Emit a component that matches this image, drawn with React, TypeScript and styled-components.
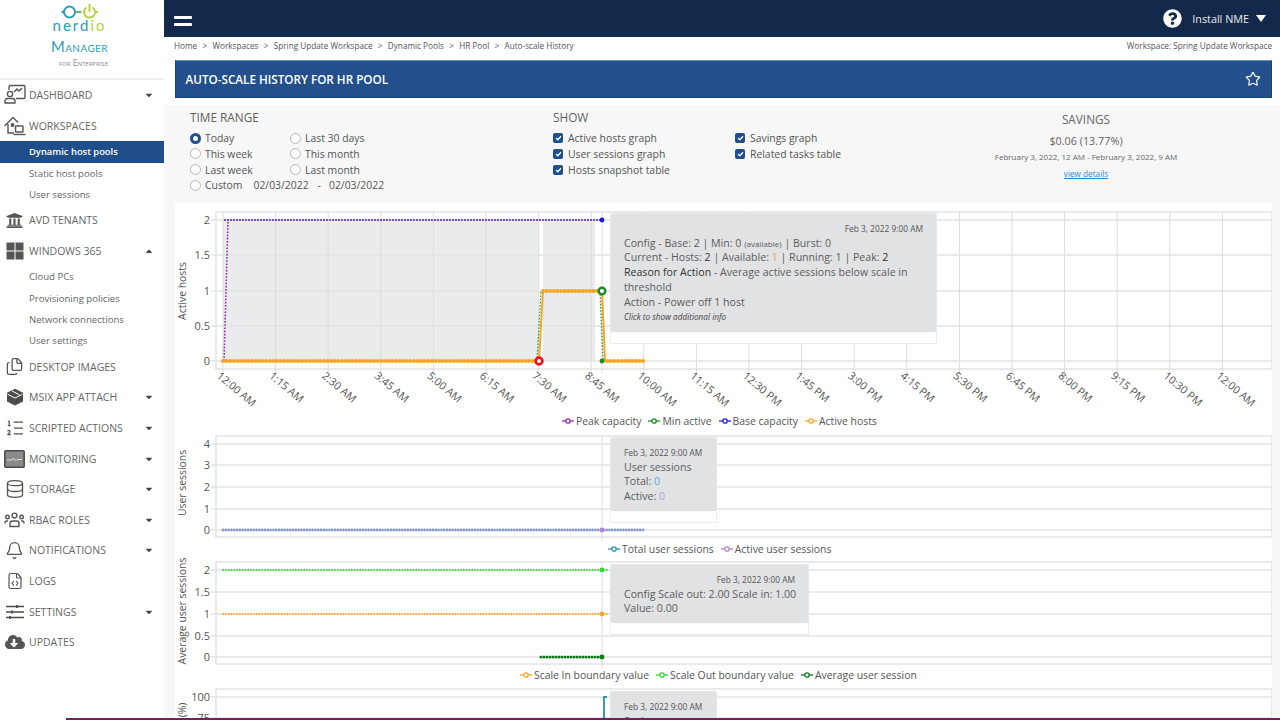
import React from "react";
import styled, { createGlobalStyle } from "styled-components";
import { Bell, Database, FileCode, Files, ListOrdered, Star } from "lucide-react";
import { FaCloudDownloadAlt, FaQuestionCircle, FaUniversity, FaCaretDown, FaCaretUp } from "react-icons/fa";

const Global = createGlobalStyle`
  html, body { margin: 0; padding: 0; height: 720px; overflow: hidden; background: #fff; }
  body { font-family: "Open Sans", "Liberation Sans", sans-serif; color: #555; }
  * { box-sizing: border-box; }
`;

const Page = styled.div`
  display: flex;
  width: 1280px;
  height: 720px;
  overflow: hidden;
  position: relative;
`;
const Sidebar = styled.aside`
  width: 164px;
  flex: none;
  background: #fff;
  display: flex;
  flex-direction: column;
`;
const LogoBox = styled.div`
  height: 80px;
  flex: none;
  border-bottom: 2px solid #eeeeee;
  display: flex;
  flex-direction: column;
  align-items: center;
  padding-right: 5px;
`;
const LogoWord = styled.div`
  font-family: "Lato", sans-serif;
  font-size: 15px;
  line-height: 14px;
  letter-spacing: 2px;
  color: #2a9bb8;
  margin-top: -6px;
  span { color: #b9cf45; }
`;
const LogoManager = styled.div`
  font-family: "Lato", sans-serif;
  font-size: 14.8px;
  line-height: 16px;
  margin-top: 6px;
  color: #2a9bb8;
  font-variant: small-caps;
  letter-spacing: 0.4px;
`;
const LogoFor = styled.div`
  font-size: 8.6px;
  line-height: 9px;
  margin-top: 5px;
  margin-left: 8px;
  color: #8a8a8a;
  font-variant: small-caps;
`;
const NavRow = styled.div`
  height: 30.65px;
  flex: none;
  display: flex;
  align-items: center;
  font-size: 10.5px;
  color: #666;
  position: relative;
  padding-left: 29px;
`;
const NavIcon = styled.span`
  position: absolute;
  left: 2.5px;
  top: 50%;
  transform: translateY(-50%);
  width: 24px;
  height: 24px;
  display: flex;
  align-items: center;
  justify-content: center;
  color: #555;
`;
const NavCaret = styled.span`
  position: absolute;
  left: 144px;
  top: 50%;
  transform: translateY(-50%);
  display: flex;
  color: #444;
`;
const SubRow = styled.div<{ $active?: boolean }>`
  height: 21.25px;
  flex: none;
  display: flex;
  align-items: center;
  padding-left: 29px;
  font-size: ${(p) => (p.$active ? "9.4px" : "9.6px")};
  color: ${(p) => (p.$active ? "#fff" : "#666")};
  background: ${(p) => (p.$active ? "#1f4e8a" : "transparent")};
  font-weight: ${(p) => (p.$active ? 600 : 400)};
`;
const Main = styled.main`
  flex: 1;
  min-width: 0;
  background: #f7f7f7;
  display: flex;
  flex-direction: column;
`;
const TopBar = styled.header`
  height: 37px;
  flex: none;
  background: #12294b;
  display: flex;
  align-items: center;
  padding: 0 12px 0 10px;
  color: #fff;
`;
const Burger = styled.div`
  width: 18px;
  margin-top: 5px;
  display: flex;
  flex-direction: column;
  gap: 4px;
  span { height: 3px; background: #fff; display: block; border-radius: 1px; }
`;
const TopRight = styled.div`
  margin-left: auto;
  display: flex;
  align-items: center;
  font-size: 10.8px;
  color: #e8ebf0;
`;
const InstallLabel = styled.span`
  margin-left: 10px;
`;
const CaretDown = styled.span`
  width: 0;
  height: 0;
  border-left: 5px solid transparent;
  border-right: 5px solid transparent;
  border-top: 7px solid #fff;
  margin-left: 7px;
  margin-right: 2px;
`;
const CrumbBar = styled.div`
  height: 23px;
  flex: none;
  background: #fff;
  display: flex;
  align-items: center;
  justify-content: space-between;
  padding: 0 8px 6px 10px;
  font-size: 8.2px;
  color: #555;
`;
const Crumbs = styled.div`
  display: flex;
  gap: 5.3px;
`;
const HeadWrap = styled.div`
  background: #fff;
  padding: 0 8px 7px 11px;
  flex: none;
`;
const TitleBar = styled.div`
  height: 38px;
  background: #23508c;
  border: 1px solid #1c4273;
  border-top-color: #6d90bd;
  display: flex;
  align-items: center;
  justify-content: space-between;
  padding: 0 10px 0 9.5px;
  font-size: 11.7px;
  font-weight: 600;
  color: #fff;
`;
const Filters = styled.section`
  height: 98px;
  flex: none;
  display: flex;
  padding-top: 4px;
  position: relative;
`;
const TimeCol = styled.div`
  width: 389px;
  flex: none;
  padding-left: 26px;
`;
const ShowCol = styled.div`
  width: 432px;
  flex: none;
`;
const SectionTitle = styled.div`
  font-size: 11.8px;
  line-height: 16px;
  color: #5f5f5f;
  margin-bottom: 5.5px;
`;
const OptionGrid = styled.div<{ $col: number }>`
  display: grid;
  grid-template-columns: ${(p) => p.$col}px auto;
  grid-auto-rows: 15.67px;
  justify-content: start;
`;
const Option = styled.label`
  display: flex;
  align-items: center;
  font-size: 10.4px;
  color: #555;
  white-space: nowrap;
`;
const Radio = styled.span<{ $on?: boolean }>`
  width: 11px;
  height: 11px;
  border-radius: 50%;
  margin-right: 4px;
  flex: none;
  background: #fff;
  border: ${(p) => (p.$on ? "3px solid #1f4e8a" : "1px solid #b5b5b5")};
`;
const Check = styled.span`
  width: 10px;
  height: 10px;
  border-radius: 2px;
  margin-right: 5px;
  flex: none;
  background: #1f4e8a;
  display: flex;
  align-items: center;
  justify-content: center;
`;
const DateText = styled.span<{ $m: number }>`
  margin-left: ${(p) => p.$m}px;
`;
const SavingsCol = styled.div`
  width: 202px;
  flex: none;
  display: flex;
  flex-direction: column;
  align-items: center;
  color: #666;
`;
const SavTitle = styled.div`
  font-size: 11.8px;
  line-height: 16px;
  margin-top: 2px;
`;
const SavValue = styled.div`
  font-size: 10.8px;
  line-height: 14px;
  margin-top: 7px;
`;
const SavRange = styled.div`
  font-size: 8px;
  line-height: 12px;
  margin-top: 3px;
  white-space: nowrap;
`;
const SavLink = styled.a`
  font-size: 8.2px;
  line-height: 12px;
  margin-top: 5px;
  color: #2e86c9;
  text-decoration: underline;
`;
const ChartPanel = styled.div`
  margin-left: 11px;
  width: 1097px;
  background: #fff;
  flex: none;
  height: 520px;
`;
const ChartBlock = styled.div<{ $h: number }>`
  position: relative;
  height: ${(p) => p.$h}px;
  svg.plot { display: block; position: absolute; left: 0; top: 0; }
`;
const Legend = styled.div<{ $top: number; $left: number }>`
  position: absolute;
  top: ${(p) => p.$top}px;
  left: ${(p) => p.$left}px;
  display: flex;
  gap: 7px;
  font-size: 10.4px;
  line-height: 14px;
  color: #555;
  white-space: nowrap;
`;
const LegendItem = styled.span`
  display: inline-flex;
  align-items: center;
  gap: 2px;
`;
const TipShadow = styled.div<{ $l: number; $t: number; $w: number; $h: number }>`
  position: absolute;
  left: ${(p) => p.$l}px;
  top: ${(p) => p.$t}px;
  width: ${(p) => p.$w}px;
  height: ${(p) => p.$h}px;
  background: #fff;
  border: 1px solid #ececec;
`;
const Tip = styled.div`
  position: absolute;
  left: 0;
  right: 0;
  top: 0;
  bottom: 11px;
  background: #e1e2e4;
  border-radius: 3px;
  padding: 8px 13px 0 13px;
  font-size: 10.6px;
  line-height: 14.9px;
  color: #5c5c5c;
  box-shadow: 0 0 1px rgba(0,0,0,.25);
  overflow: hidden;
`;
const TipDate = styled.div<{ $right?: boolean }>`
  font-size: 8.4px;
  line-height: 13.5px;
  text-align: ${(p) => (p.$right ? "right" : "left")};
  color: #555;
  white-space: nowrap;
`;
const TipLine = styled.div`
  white-space: nowrap;
`;
const Dark = styled.span`
  color: #333;
`;
const Small = styled.span`
  font-size: 8px;
  line-height: 1;
`;
const Italic = styled.div`
  font-size: 8.2px;
  font-style: italic;
  color: #444;
`;
const Colored = styled.span<{ $c: string }>`
  color: ${(p) => p.$c};
`;
const BottomLine = styled.div`
  position: absolute;
  left: 66px;
  right: 0;
  bottom: 0;
  height: 2px;
  background: #7a1f55;
`;

const Logo = () => (
  <svg width="46" height="24" viewBox="0 0 46 24" fill="none" strokeWidth="2">
    <circle cx="12.5" cy="12" r="5.5" stroke="#2a9bb8" />
    <path d="M4.5 12h2.5" stroke="#2a9bb8" />
    <path d="M18 12h6.5" stroke="#6fb27a" />
    <path d="M29.5 7.500a5.500 5.500 0 1 0 6 0" stroke="#b9cf45" />
    <path d="M32.5 4v8" stroke="#b9cf45" />
    <path d="M38 12h3" stroke="#b9cf45" />
  </svg>
);
const DashIcon = () => (
  <svg width="24" height="22" viewBox="0 0 24 22" fill="none" stroke="#555" strokeWidth="1.4">
    <path d="M6 6V3a1.500 1.500 0 0 1 1.500-1.500h13A1.500 1.500 0 0 1 22 3v10a1.500 1.500 0 0 1-1.500 1.500H13" />
    <path d="M11 8l3-3 2 2 3-3" />
    <circle cx="7" cy="10" r="2.6" />
    <path d="M2 19v-2a2.500 2.500 0 0 1 2.500-2.500h5A2.500 2.500 0 0 1 12 17v2z" />
  </svg>
);
const WorkIcon = () => (
  <svg width="24" height="22" viewBox="0 0 24 22" fill="none" stroke="#555" strokeWidth="1.4">
    <path d="M1.500 11L10 2.500 15 7.500M5 9v9h6" />
    <rect x="12.5" y="11" width="7.5" height="6" rx="0.6" />
    <path d="M10.500 19.500h12" />
    <circle cx="9.5" cy="10" r="1.2" fill="#555" />
  </svg>
);
const WinIcon = () => (
  <svg width="18" height="18" viewBox="0 0 18 18" fill="#555">
    <rect x="0.5" y="0.5" width="8" height="8" />
    <rect x="9.5" y="0.5" width="8" height="8" />
    <rect x="0.5" y="9.5" width="8" height="8" />
    <rect x="9.5" y="9.5" width="8" height="8" />
  </svg>
);
const BoxIcon = () => (
  <svg width="18" height="18" viewBox="0 0 18 18" fill="#4c4c4c">
    <path d="M9 .8L17 4.700v8.800L9 17.500 1 13.500V4.700z" />
    <path d="M1.500 6.200L9 10l7.500-3.800M6 3l7.500 3.800" stroke="#fff" strokeWidth="1" fill="none" />
  </svg>
);
const MonIcon = () => (
  <svg width="21" height="18" viewBox="0 0 21 18">
    <rect x="0.8" y="0.8" width="19.4" height="16.4" rx="1" fill="#8a8a8a" stroke="#4a4a4a" strokeWidth="1.5" />
    <path d="M3 10h5l1.500-2 2 3 1.500-1.500H18" stroke="#ddd" strokeWidth="1" fill="none" />
  </svg>
);
const RolesIcon = () => (
  <svg width="21" height="18" viewBox="0 0 21 18" fill="none" stroke="#555" strokeWidth="1.4">
    <circle cx="10.5" cy="4.5" r="2.4" />
    <circle cx="3.5" cy="6" r="1.8" />
    <circle cx="17.5" cy="6" r="1.8" />
    <path d="M6 15.500v-3A2.500 2.500 0 0 1 8.500 10h4a2.500 2.500 0 0 1 2.500 2.500v3z" />
    <path d="M1 12.500v-.8A1.800 1.800 0 0 1 2.800 10H4M20 12.500v-.8A1.800 1.800 0 0 0 18.200 10H17" />
  </svg>
);
const SettingsIcon = () => (
  <svg width="20" height="18" viewBox="0 0 20 18" fill="#4c4c4c" stroke="#4c4c4c" strokeWidth="1.3">
    <path d="M1 3.500h18M1 9h18M1 14.500h18" fill="none" />
    <path d="M12 2v3M7 7.500v3M5 13v3" strokeWidth="1.8" />
  </svg>
);

const dots = (x1: number, x2: number, y: number, c: string, r = 1, step = 3) => {
  const out: React.ReactNode[] = [];
  for (let x = x1; x <= x2; x += step) out.push(<circle key={`${c}${y}${x}`} cx={x} cy={y} r={r} fill={c} />);
  return out;
};

const xLabels = ["12:00 AM","1:15 AM","2:30 AM","3:45 AM","5:00 AM","6:15 AM","7:30 AM","8:45 AM","10:00 AM","11:15 AM","12:30 PM","1:45 PM","3:00 PM","4:15 PM","5:30 PM","6:45 PM","8:00 PM","9:15 PM","10:30 PM","12:00 AM"];
const X0 = 48;
const STEP = 52.6;
const xAt = (i: number) => X0 + i * STEP;
const textFill = "#555";

type Axis = { top: number; bottom: number; ticks: [string, number][]; title: string; titleY: number };
const Grid = ({ a, labels, vgrid = true }: { a: Axis; labels?: boolean; vgrid?: boolean }) => (
  <>
    <rect x="41" y={a.top} width="1056" height={a.bottom - a.top} fill="none" stroke="#dfdfdf" strokeWidth="1.3" />
    {a.ticks.map(([l, y]) => (
      <g key={l}>
        <line x1="36" x2="1097" y1={y} y2={y} stroke="#e3e3e3" strokeWidth="1.5" />
        <text x="35" y={y + 4} textAnchor="end" fontSize="11" fill={textFill} fontFamily="Open Sans">{l}</text>
      </g>
    ))}
    {vgrid && xLabels.map((l, i) => <line key={i} x1={xAt(i)} x2={xAt(i)} y1={a.top} y2={a.bottom + 4} stroke="#dcdcdc" />)}
    {labels && xLabels.map((l, i) => (
      <text key={i} x={xAt(i) - 7} y={a.bottom + 8} fontSize="10.8" fill={textFill} fontFamily="Open Sans" transform={`rotate(40 ${xAt(i) - 7} ${a.bottom + 8})`}>{l}</text>
    ))}
    <text x="11" y={a.titleY} textAnchor="middle" fontSize="10.4" fill={textFill} fontFamily="Open Sans" transform={`rotate(-90 11 ${a.titleY})`}>{a.title}</text>
  </>
);
const Mark = ({ c }: { c: string }) => (
  <svg width="12" height="8" viewBox="0 0 12 8" fill="none">
    <path d="M0 4h12" stroke={c} strokeWidth="1.3" />
    <circle cx="6" cy="4" r="2.2" fill="#fff" stroke={c} strokeWidth="1.3" />
  </svg>
);

const a1: Axis = { top: 9, bottom: 166, ticks: [["2", 17], ["1.5", 52], ["1", 88], ["0.5", 123], ["0", 158]], title: "Active hosts", titleY: 88 };
const a2: Axis = { top: 233, bottom: 334, ticks: [["4", 241], ["3", 262], ["2", 284], ["1", 306], ["0", 327]], title: "User sessions", titleY: 280 };
const a3: Axis = { top: 359, bottom: 461, ticks: [["2", 367], ["1.5", 389], ["1", 411], ["0.5", 433], ["0", 454]], title: "Average user sessions", titleY: 408 };
const a4: Axis = { top: 486, bottom: 560, ticks: [["100", 494], ["75", 515]], title: "(%)", titleY: 507 };

const Charts = () => (
  <svg className="plot" width="1097" height="520" viewBox="0 0 1097 520">
    <rect x="48" y="17" width="315" height="141" fill="#eaebed" />
    <rect x="368" y="17" width="52" height="141" fill="#eaebed" />
    <Grid a={a1} labels />
    <line x1="427" x2="427" y1="9" y2="170" stroke="#dcdcdc" />
    {dots(50, 430, 17, "#5a27c8", 1.05, 3)}
    <path d="M49 158L53 17" stroke="#8e2ba8" strokeWidth="1.6" strokeDasharray="1.6 1.6" fill="none" />
    <g stroke="#2c9a3a" strokeWidth="1.3" strokeDasharray="1.6 1.6" fill="none"><path d="M362 158L366 88" /><path d="M425 88L428 158" /></g>
    <path d="M48 158H364L368 88H427L430 158H470" stroke="#f5a623" strokeWidth="2" fill="none" />
    {dots(48, 364, 158, "#f5a623", 2.1, 3.6)}
    {dots(368, 424, 88, "#f5a623", 2.1, 3.6)}
    {dots(432, 470, 158, "#f5a623", 2.1, 3.6)}
    <circle cx="364" cy="158" r="3.3" fill="#fff" stroke="#e6161d" strokeWidth="2.8" />
    <circle cx="427" cy="88" r="3.3" fill="#fff" stroke="#1a8a25" strokeWidth="2.4" />
    <circle cx="427" cy="158" r="2.4" fill="#1a8a25" />
    <circle cx="427" cy="17" r="2.4" fill="#1a1ae6" />

    <Grid a={a2} vgrid={false} />
    <line x1="427" x2="427" y1="233" y2="338" stroke="#dcdcdc" />
    {dots(48, 470, 327, "#8a9ad0", 1.4, 2.8)}
    <circle cx="427" cy="327" r="2.4" fill="#b184d6" />

    <Grid a={a3} vgrid={false} />
    <line x1="427" x2="427" y1="359" y2="465" stroke="#dcdcdc" />
    {dots(48, 434, 367, "#2fd62f", 1, 2.8)}
    {dots(48, 434, 411, "#f5a623", 1, 2.8)}
    {dots(366, 427, 454, "#0f7a1c", 1.5, 3)}
    <circle cx="427" cy="367" r="2.4" fill="#2fd62f" />
    <circle cx="427" cy="411" r="2.4" fill="#f5a623" />
    <circle cx="427" cy="454" r="2.4" fill="#0f7a1c" />

    <Grid a={a4} vgrid={false} />
    <path d="M429 520V494H432" stroke="#2b93ad" strokeWidth="1.8" fill="none" />
  </svg>
);

const Nav = ({ icon, label, caret }: { icon: React.ReactNode; label: string; caret?: "down" | "up" }) => (
  <NavRow>
    <NavIcon>{icon}</NavIcon>
    {label}
    {caret && <NavCaret>{caret === "down" ? <FaCaretDown size={10} /> : <FaCaretUp size={10} />}</NavCaret>}
  </NavRow>
);

export default function App() {
  return (
    <Page>
      <Global />
      <Sidebar>
        <LogoBox>
          <Logo />
          <LogoWord>nerd<span>io</span></LogoWord>
          <LogoManager>Manager</LogoManager>
          <LogoFor>for Enterprise</LogoFor>
        </LogoBox>
        <Nav icon={<DashIcon />} label="DASHBOARD" caret="down" />
        <Nav icon={<WorkIcon />} label="WORKSPACES" />
        <SubRow $active>Dynamic host pools</SubRow>
        <SubRow>Static host pools</SubRow>
        <SubRow>User sessions</SubRow>
        <Nav icon={<FaUniversity size={17} />} label="AVD TENANTS" />
        <Nav icon={<WinIcon />} label="WINDOWS 365" caret="up" />
        <SubRow>Cloud PCs</SubRow>
        <SubRow>Provisioning policies</SubRow>
        <SubRow>Network connections</SubRow>
        <SubRow>User settings</SubRow>
        <Nav icon={<Files size={19} strokeWidth={1.6} />} label="DESKTOP IMAGES" />
        <Nav icon={<BoxIcon />} label="MSIX APP ATTACH" caret="down" />
        <Nav icon={<ListOrdered size={20} strokeWidth={1.5} />} label="SCRIPTED ACTIONS" caret="down" />
        <Nav icon={<MonIcon />} label="MONITORING" caret="down" />
        <Nav icon={<Database size={20} strokeWidth={1.6} />} label="STORAGE" caret="down" />
        <Nav icon={<RolesIcon />} label="RBAC ROLES" caret="down" />
        <Nav icon={<Bell size={19} strokeWidth={1.6} />} label="NOTIFICATIONS" caret="down" />
        <Nav icon={<FileCode size={18} strokeWidth={1.6} />} label="LOGS" />
        <Nav icon={<SettingsIcon />} label="SETTINGS" caret="down" />
        <Nav icon={<FaCloudDownloadAlt size={20} />} label="UPDATES" />
      </Sidebar>
      <Main>
        <TopBar>
          <Burger><span /><span /></Burger>
          <TopRight>
            <FaQuestionCircle size={19} color="#fff" />
            <InstallLabel>Install NME</InstallLabel>
            <CaretDown />
          </TopRight>
        </TopBar>
        <CrumbBar>
          <Crumbs>
            <span>Home</span><span>&gt;</span><span>Workspaces</span><span>&gt;</span><span>Spring Update Workspace</span><span>&gt;</span><span>Dynamic Pools</span><span>&gt;</span><span>HR Pool</span><span>&gt;</span><span>Auto-scale History</span>
          </Crumbs>
          <span>Workspace: Spring Update Workspace</span>
        </CrumbBar>
        <HeadWrap>
          <TitleBar>
            AUTO-SCALE HISTORY FOR HR POOL
            <Star size={16} strokeWidth={1.7} color="#fff" />
          </TitleBar>
        </HeadWrap>
        <Filters>
          <TimeCol>
            <SectionTitle>TIME RANGE</SectionTitle>
            <OptionGrid $col={100}>
              <Option><Radio $on />Today</Option>
              <Option><Radio />Last 30 days</Option>
              <Option><Radio />This week</Option>
              <Option><Radio />This month</Option>
              <Option><Radio />Last week</Option>
              <Option><Radio />Last month</Option>
              <Option><Radio />Custom<DateText $m={11}>02/03/2022</DateText><DateText $m={9}>-</DateText><DateText $m={8}>02/03/2022</DateText></Option>
            </OptionGrid>
          </TimeCol>
          <ShowCol>
            <SectionTitle>SHOW</SectionTitle>
            <OptionGrid $col={182}>
              {["Active hosts graph", "Savings graph", "User sessions graph", "Related tasks table", "Hosts snapshot table"].map((t) => (
                <Option key={t}>
                  <Check><svg width="7" height="6" viewBox="0 0 7 6" fill="none"><path d="M1 3l1.8 1.8L6 1.200" stroke="#fff" strokeWidth="1.3" /></svg></Check>
                  {t}
                </Option>
              ))}
            </OptionGrid>
          </ShowCol>
          <SavingsCol>
            <SavTitle>SAVINGS</SavTitle>
            <SavValue>$0.06 (13.77%)</SavValue>
            <SavRange>February 3, 2022, 12 AM - February 3, 2022, 9 AM</SavRange>
            <SavLink>view details</SavLink>
          </SavingsCol>
        </Filters>
        <ChartPanel>
          <ChartBlock $h={520}>
            <Charts />
            <Legend $top={211} $left={387}>
              <LegendItem><Mark c="#8e2ba8" />Peak capacity</LegendItem>
              <LegendItem><Mark c="#1a8a25" />Min active</LegendItem>
              <LegendItem><Mark c="#1a1ae6" />Base capacity</LegendItem>
              <LegendItem><Mark c="#f5a623" />Active hosts</LegendItem>
            </Legend>
            <Legend $top={339} $left={433}>
              <LegendItem><Mark c="#2b93ad" />Total user sessions</LegendItem>
              <LegendItem><Mark c="#b184d6" />Active user sessions</LegendItem>
            </Legend>
            <Legend $top={465} $left={345}>
              <LegendItem><Mark c="#f5a623" />Scale In boundary value</LegendItem>
              <LegendItem><Mark c="#2fd62f" />Scale Out boundary value</LegendItem>
              <LegendItem><Mark c="#0f7a1c" />Average user session</LegendItem>
            </Legend>

            <TipShadow $l={435} $t={10} $w={327} $h={131}>
              <Tip>
                <TipDate $right>Feb 3, 2022 9:00 AM</TipDate>
                <div>Config - Base: 2 | Min: 0 <Small>(available)</Small> | Burst: 0</div>
                <div>Current - Hosts: <Dark>2</Dark> | Available: <Colored $c="#f5a623">1</Colored> | Running: 1 | Peak: <Dark>2</Dark></div>
                <div><Dark>Reason for Action</Dark> - Average active sessions below scale in threshold</div>
                <div>Action - Power off 1 host</div>
                <Italic>Click to show additional info</Italic>
              </Tip>
            </TipShadow>
            <TipShadow $l={435} $t={234} $w={107} $h={86}>
              <Tip>
                <TipDate>Feb 3, 2022 9:00 AM</TipDate>
                <div>User sessions</div>
                <div>Total: <Colored $c="#4fb0cf">0</Colored></div>
                <div>Active: <Colored $c="#b79ad8">0</Colored></div>
              </Tip>
            </TipShadow>
            <TipShadow $l={435} $t={361} $w={199} $h={71}>
              <Tip>
                <TipDate $right>Feb 3, 2022 9:00 AM</TipDate>
                <TipLine>Config Scale out: 2.00 Scale in: 1.00</TipLine>
                <TipLine>Value: 0.00</TipLine>
              </Tip>
            </TipShadow>
            <TipShadow $l={435} $t={488} $w={107} $h={86}>
              <Tip>
                <TipDate>Feb 3, 2022 9:00 AM</TipDate>
                <div>Savings</div>
              </Tip>
            </TipShadow>
          </ChartBlock>
        </ChartPanel>
      </Main>
      <BottomLine />
    </Page>
  );
}
